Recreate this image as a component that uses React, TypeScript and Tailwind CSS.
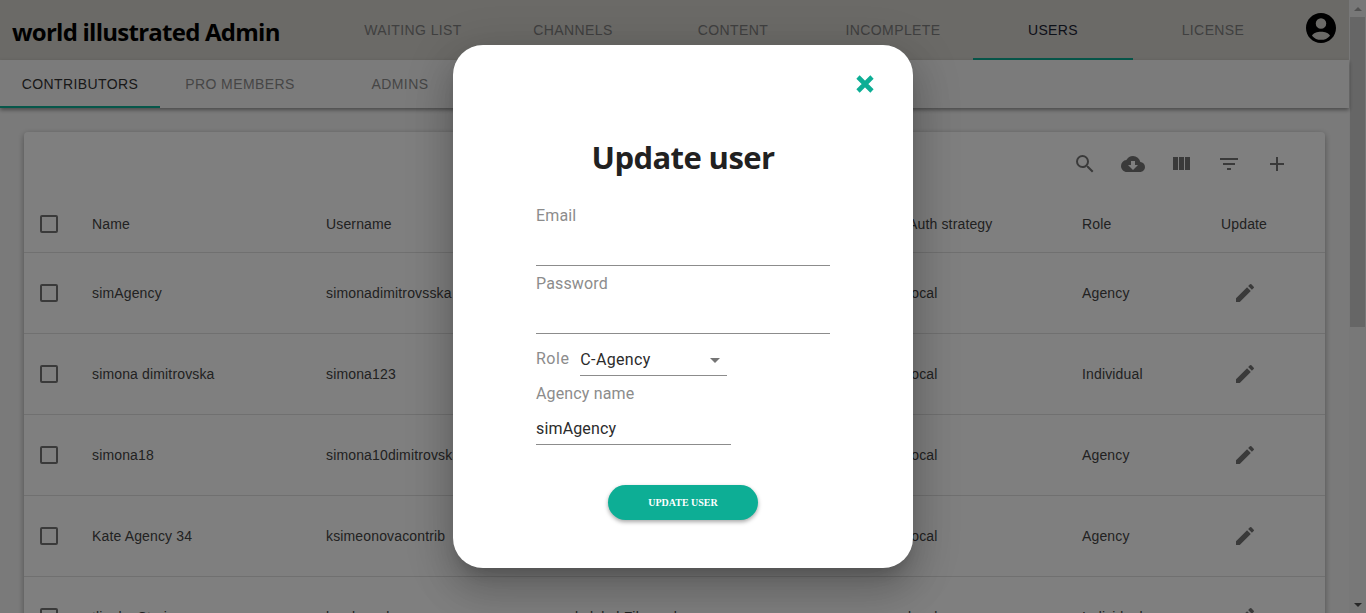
const navTabs = ["WAITING LIST", "CHANNELS", "CONTENT", "INCOMPLETE", "USERS", "LICENSE"];
const subTabs = ["CONTRIBUTORS", "PRO MEMBERS", "ADMINS"];

const rows = [
  { name: "simAgency", username: "simonadimitrovsska", email: "", auth: "local", role: "Agency" },
  { name: "simona dimitrovska", username: "simona123", email: "", auth: "local", role: "Individual" },
  { name: "simona18", username: "simona10dimitrovska", email: "", auth: "local", role: "Agency" },
  { name: "Kate Agency 34", username: "ksimeonovacontrib", email: "", auth: "local", role: "Agency" },
  { name: "tliaoko Stories", username: "ksmkasmk", email: "kalakal.Films.mk", auth: "local", role: "Individual" },
];

function Checkbox() {
  return <div className="h-[18px] w-[18px] rounded-[2px] border-2 border-[#757575]" />;
}

function Pencil() {
  return (
    <svg viewBox="0 0 24 24" className="h-6 w-6 fill-[#757575]">
      <path d="M3 17.25V21h3.75L17.81 9.94l-3.75-3.75L3 17.25zM20.71 7.04a1 1 0 0 0 0-1.41l-2.34-2.34a1 1 0 0 0-1.41 0l-1.83 1.83 3.75 3.75 1.83-1.83z" />
    </svg>
  );
}

function ToolbarIcon({ d }: { d: string }) {
  return (
    <svg viewBox="0 0 24 24" className="h-6 w-6 fill-[#757575]">
      <path d={d} />
    </svg>
  );
}

function Field({ label }: { label: string }) {
  return (
    <div className="h-[68px]">
      <div className="h-[21px] text-base leading-[21px] tracking-[0.15px] text-[#8c8c8c]">{label}</div>
      <div className="h-10 border-b border-[#8c8c8c]" />
    </div>
  );
}

export default function App() {
  return (
    <div className="relative flex h-[613px] w-full overflow-hidden bg-[#f5f5f5] font-['Liberation_Sans',Arial,sans-serif]">
      <div className="min-w-0 flex-1">
        <header className="flex h-[60px] bg-[#d6d4ce]">
          <div className="w-[333px] pl-3 pt-[14px] text-2xl leading-9 font-bold tracking-[-0.75px] whitespace-nowrap text-black font-['Open_Sans',sans-serif]">
            world illustrated Admin
          </div>
          <nav className="flex">
            {navTabs.map((tab) => (
              <div
                key={tab}
                className={`flex h-[60px] w-40 items-center justify-center border-y-2 border-t-transparent text-sm tracking-[0.4px] ${
                  tab === "USERS" ? "border-b-[#0dae95] text-[#1a2233]" : "border-b-transparent text-[#808080]"
                }`}
              >
                {tab}
              </div>
            ))}
          </nav>
          <div className="ml-auto pt-[10px] pr-[10px]">
            <svg viewBox="0 0 24 24" className="h-9 w-9 fill-black">
              <path d="M12 2C6.48 2 2 6.48 2 12s4.48 10 10 10 10-4.48 10-10S17.52 2 12 2zm0 3.5a3.5 3.5 0 1 1 0 7 3.5 3.5 0 0 1 0-7zm0 14.4a7.9 7.9 0 0 1-6-2.8c.8-1.6 3.4-2.6 6-2.6s5.2 1 6 2.6a7.9 7.9 0 0 1-6 2.8z" />
            </svg>
          </div>
        </header>

        <div className="relative flex h-12 bg-[#f7f7f7] shadow-[0_2px_4px_rgba(0,0,0,0.4)]">
          {subTabs.map((tab, i) => (
            <div
              key={tab}
              className={`flex w-40 items-center justify-center border-y-2 border-t-transparent text-sm tracking-[0.4px] ${
                i === 0 ? "border-b-[#0dae95] text-[#333333]" : "border-b-transparent text-[#8c8c8c]"
              }`}
            >
              {tab}
            </div>
          ))}
        </div>

        <main className="px-6 pt-6">
          <div className="rounded bg-white shadow-[0_2px_6px_rgba(0,0,0,0.35)]">
            <div className="flex h-16 items-center justify-end gap-6 pr-9">
              <ToolbarIcon d="M15.5 14h-.79l-.28-.27A6.47 6.47 0 0 0 16 9.5 6.5 6.5 0 1 0 9.5 16c1.61 0 3.09-.59 4.23-1.57l.27.28v.79l5 4.99L20.49 19l-4.99-5zm-6 0a4.5 4.5 0 1 1 0-9 4.5 4.5 0 0 1 0 9z" />
              <ToolbarIcon d="M19.35 10.04A7.49 7.49 0 0 0 12 4C9.11 4 6.6 5.64 5.35 8.04A5.994 5.994 0 0 0 0 14c0 3.31 2.69 6 6 6h13c2.76 0 5-2.24 5-5 0-2.64-2.05-4.78-4.65-4.96zM17 13l-5 5-5-5h3V9h4v4h3z" />
              <ToolbarIcon d="M10 18h5V5h-5v13zm-6 0h5V5H4v13zM16 5v13h5V5h-5z" />
              <ToolbarIcon d="M10 18h4v-2h-4v2zM3 6v2h18V6H3zm3 7h12v-2H6v2z" />
              <ToolbarIcon d="M19 13h-6v6h-2v-6H5v-2h6V5h2v6h6v2z" />
            </div>
            <div className="grid h-[57px] grid-cols-[68px_234px_249px_333px_174px_139px_1fr] items-center border-b border-[#e0e0e0] text-sm tracking-[0.15px] text-[#444444]">
              <div className="pl-4"><Checkbox /></div>
              <div>Name</div>
              <div>Username</div>
              <div>Email</div>
              <div>Auth strategy</div>
              <div>Role</div>
              <div>Update</div>
            </div>
            {rows.map((row) => (
              <div
                key={row.name}
                className="grid h-[81px] grid-cols-[68px_234px_249px_333px_174px_139px_1fr] items-center border-b border-[#e0e0e0] text-sm tracking-[0.15px] text-[#444444]"
              >
                <div className="pl-4"><Checkbox /></div>
                <div>{row.name}</div>
                <div>{row.username}</div>
                <div>{row.email}</div>
                <div>{row.auth}</div>
                <div>{row.role}</div>
                <div className="pl-3"><Pencil /></div>
              </div>
            ))}
          </div>
        </main>
      </div>

      {/* scrollbar, sits under the dim layer too */}
      <div className="flex w-[17px] shrink-0 flex-col items-center bg-[#f1f1f1]">
        <div className="flex h-[17px] items-center">
          <div className="border-x-4 border-b-4 border-x-transparent border-b-[#a3a3a3]" />
        </div>
        <div className="h-[310px] w-[15px] bg-[#cdcdcd]" />
        <div className="mt-auto flex h-[17px] items-center">
          <div className="border-x-4 border-t-4 border-x-transparent border-t-[#505050]" />
        </div>
      </div>

      {/* dim layer + modal */}
      <div className="absolute inset-0 flex items-start justify-center bg-black/50 pt-[45px]">
        <div className="h-[523px] w-[460px] rounded-[30px] bg-white px-[83px] font-['Roboto',sans-serif] shadow-[0_11px_15px_-7px_rgba(0,0,0,0.2),0_24px_38px_3px_rgba(0,0,0,0.14),0_9px_46px_8px_rgba(0,0,0,0.12)]">
          <div className="flex h-[78px] justify-end pt-[30px]">
            <svg viewBox="0 0 18 18" className="mr-[-44px] h-[18px] w-[18px] stroke-[#0dae95]" strokeWidth="4.6" fill="none">
              <path d="M2 2L16 16M16 2L2 16" />
            </svg>
          </div>
          <h2 className="h-[68px] text-center text-[31px] leading-[68px] font-bold tracking-[-0.6px] text-[#212121] font-['Open_Sans',sans-serif]">
            Update user
          </h2>
          <div className="pt-[14px]">
            <Field label="Email" />
            <Field label="Password" />
          </div>
          <div className="flex h-[35px] items-end">
            <span className="pb-[5px] text-base tracking-[0.5px] text-[#8c8c8c]">Role</span>
            <div className="relative ml-[11px] flex h-8 w-[147px] items-center border-b border-[#8c8c8c] text-base tracking-[0.35px] text-[#2b2b2b]">
              C-Agency
              <div className="absolute top-[14px] right-[7px] border-x-[5px] border-t-[5px] border-x-transparent border-t-[#757575]" />
            </div>
          </div>
          <div className="h-[28px] pt-[7px] text-base leading-[21px] tracking-[0.15px] text-[#8c8c8c]">Agency name</div>
          <div className="flex h-[41px] w-[195px] items-center border-b border-[#8c8c8c] pt-[10px] text-base tracking-[0.15px] text-[#2b2b2b]">
            simAgency
          </div>
          <div className="flex justify-center pt-10">
            <button
              type="button"
              className="h-[35px] w-[150px] rounded-full bg-[#0dae95] text-[10px] font-bold text-white shadow-[0_2px_4px_rgba(0,0,0,0.35)] font-['Liberation_Serif',serif]"
            >
              UPDATE USER
            </button>
          </div>
        </div>
      </div>
    </div>
  );
}
